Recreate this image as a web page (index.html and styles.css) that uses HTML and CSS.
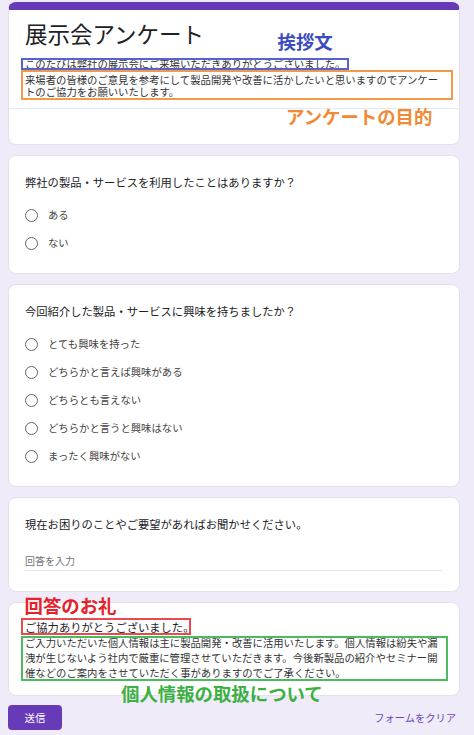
FILE: index.html
```html
<!DOCTYPE html>
<html lang="ja">
<head>
<meta charset="utf-8">
<title>展示会アンケート</title>
<link rel="stylesheet" href="styles.css">
</head>
<body>
<div class="page">
  <section class="card header-card">
    <div class="header-body">
      <h1 class="form-title">展示会アンケート</h1>
      <p class="desc-first">このたびは弊社の展示会にご来場いただきありがとうございました。</p>
      <p class="desc-rest">来場者の皆様のご意見を参考にして製品開発や改善に活かしたいと思いますのでアンケートのご協力をお願いいたします。</p>
    </div>
    <div class="header-foot"></div>
  </section>

  <section class="card question">
    <div class="q-title">弊社の製品・サービスを利用したことはありますか？</div>
    <div class="options">
      <label class="option"><span class="radio"></span><span class="opt-label">ある</span></label>
      <label class="option"><span class="radio"></span><span class="opt-label">ない</span></label>
    </div>
  </section>

  <section class="card question">
    <div class="q-title">今回紹介した製品・サービスに興味を持ちましたか？</div>
    <div class="options">
      <label class="option"><span class="radio"></span><span class="opt-label">とても興味を持った</span></label>
      <label class="option"><span class="radio"></span><span class="opt-label">どちらかと言えば興味がある</span></label>
      <label class="option"><span class="radio"></span><span class="opt-label">どちらとも言えない</span></label>
      <label class="option"><span class="radio"></span><span class="opt-label">どちらかと言うと興味はない</span></label>
      <label class="option"><span class="radio"></span><span class="opt-label">まったく興味がない</span></label>
    </div>
  </section>

  <section class="card question">
    <div class="q-title">現在お困りのことやご要望があればお聞かせください。</div>
    <div class="text-input">回答を入力</div>
  </section>

  <section class="card info-card">
    <div class="info-title">ご協力ありがとうございました。</div>
    <p class="info-desc">ご入力いただいた個人情報は主に製品開発・改善に活用いたします。個人情報は紛失や漏洩が生じないよう社内で厳重に管理させていただきます。今後新製品の紹介やセミナー開催などのご案内をさせていただく事がありますのでご了承ください。</p>
  </section>

  <div class="footer">
    <button class="submit" type="button">送信</button>
    <span class="clear">フォームをクリア</span>
  </div>

  <div class="note-box box-blue"></div>
  <div class="note-box box-orange"></div>
  <div class="note-box box-red"></div>
  <div class="note-box box-green"></div>
  <div class="note-label label-blue">挨拶文</div>
  <div class="note-label label-orange">アンケートの目的</div>
  <div class="note-label label-red">回答のお礼</div>
  <div class="note-label label-green">個人情報の取扱について</div>
</div>
</body>
</html>
```

FILE: styles.css
```css
html, body {
  margin: 0;
  padding: 0;
}
body {
  background: #efebf8;
  font-family: "Noto Sans CJK JP", "Noto Sans", sans-serif;
  color: #202124;
}
.page {
  position: relative;
  padding: 2px 14px 0 8px;
  width: 452px;
  display: flex;
  flex-direction: column;
  gap: 10px;
}
.card {
  background: #ffffff;
  border: 1px solid #e4e0ec;
  border-radius: 8px;
  box-sizing: border-box;
  width: 452px;
}
.header-card {
  border-top: 8px solid #673ab7;
  overflow: hidden;
}
.header-body {
  padding: 9px 16px 10.75px;
  border-bottom: 1px solid #e3eaf5;
}
.form-title {
  margin: 0;
  font-size: 22.5px;
  line-height: 28px;
  font-weight: 400;
  color: #202124;
}
.desc-first {
  margin: 10.5px 0 0;
  font-size: 10.35px;
  line-height: 12px;
  color: #333;
}
.desc-rest {
  margin: 4.75px 0 0;
  font-size: 10.35px;
  line-height: 11.5px;
  color: #333;
}
.header-foot {
  height: 35px;
}
.question {
  padding: 18px 16px 16px;
}
.q-title {
  font-size: 11.3px;
  line-height: 16px;
  color: #202124;
}
.options {
  margin-top: 11px;
  display: flex;
  flex-direction: column;
}
.option {
  height: 28px;
  display: flex;
  align-items: center;
  gap: 10px;
}
.radio {
  width: 13px;
  height: 13px;
  box-sizing: border-box;
  border: 1.5px solid #5f6368;
  border-radius: 50%;
  flex: none;
}
.opt-label {
  font-size: 10.35px;
  line-height: 14px;
  color: #444;
}
.text-input {
  margin: 17px 0 4px;
  padding-top: 2px;
  font-size: 10px;
  line-height: 19px;
  color: #70757a;
  border-bottom: 1px solid #e6e6e6;
}
.info-card {
  padding: 15.7px 16px 15.3px;
}
.info-title {
  font-size: 11.3px;
  line-height: 16px;
  color: #202124;
}
.info-desc {
  margin: 0;
  font-size: 10.35px;
  line-height: 15px;
  color: #333;
}
.footer {
  margin-top: -1px;
  display: flex;
  justify-content: space-between;
  align-items: center;
  padding-right: 4px;
}
.submit {
  width: 54px;
  height: 25px;
  border: none;
  border-radius: 4px;
  background: #673ab7;
  color: #ffffff;
  font-family: "Noto Sans CJK JP", sans-serif;
  font-size: 10.5px;
  padding: 0;
}
.clear {
  font-size: 10.25px;
  color: #6f45b8;
}

/* annotation overlays */
.note-box {
  position: absolute;
  box-sizing: border-box;
  border: 2px solid;
}
.box-blue {
  left: 21px;
  top: 58px;
  width: 328px;
  height: 12px;
  border-color: #5662d0;
}
.box-orange {
  left: 21px;
  top: 70px;
  width: 432px;
  height: 30px;
  border-color: #f29a4a;
}
.box-red {
  left: 21px;
  top: 618px;
  width: 170px;
  height: 17px;
  border-color: #e84a4f;
}
.box-green {
  left: 21px;
  top: 636px;
  width: 427px;
  height: 45px;
  border-color: #4cba5f;
}
.note-label {
  position: absolute;
  font-size: 18.4px;
  line-height: 1;
  font-weight: 700;
  white-space: nowrap;
}
.label-blue {
  left: 277.5px;
  top: 32px;
  color: #3b4cc0;
}
.label-orange {
  left: 286px;
  top: 107px;
  color: #f08a35;
}
.label-red {
  left: 24.5px;
  top: 596px;
  color: #e8202a;
}
.label-green {
  left: 121px;
  top: 684px;
  color: #3cb043;
}
```
